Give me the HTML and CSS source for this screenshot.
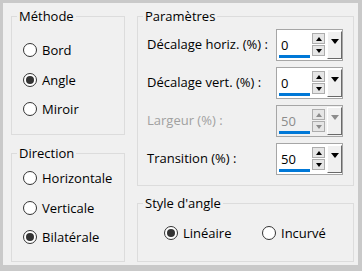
FILE: index.html
```html
<!DOCTYPE html>
<html lang="fr">
<head>
<meta charset="utf-8">
<link rel="stylesheet" href="styles.css">
</head>
<body>
<div class="dlg">
  <div class="col">
    <fieldset class="grp g-methode">
      <legend>Méthode</legend>
      <div class="opts">
        <label class="radio"><span class="rb"></span>Bord</label>
        <label class="radio"><span class="rb on"></span>Angle</label>
        <label class="radio"><span class="rb"></span>Miroir</label>
      </div>
    </fieldset>
    <fieldset class="grp g-direction">
      <legend>Direction</legend>
      <div class="opts">
        <label class="radio"><span class="rb"></span>Horizontale</label>
        <label class="radio"><span class="rb"></span>Verticale</label>
        <label class="radio"><span class="rb on"></span>Bilatérale</label>
      </div>
    </fieldset>
  </div>
  <div class="col">
    <fieldset class="grp g-params">
      <legend>Paramètres</legend>
      <div class="rows">
        <div class="row"><span class="lbl">Décalage horiz. (%) :</span>
          <div class="spin"><div class="edit">0</div><div class="ud"><span class="btn up"></span><span class="btn down"></span></div><div class="dd"></div></div>
        </div>
        <div class="row"><span class="lbl">Décalage vert. (%) :</span>
          <div class="spin"><div class="edit">0</div><div class="ud"><span class="btn up"></span><span class="btn down"></span></div><div class="dd"></div></div>
        </div>
        <div class="row dis"><span class="lbl">Largeur (%) :</span>
          <div class="spin"><div class="edit">50</div><div class="ud"><span class="btn up"></span><span class="btn down"></span></div><div class="dd"></div></div>
        </div>
        <div class="row"><span class="lbl">Transition (%) :</span>
          <div class="spin"><div class="edit">50</div><div class="ud"><span class="btn up"></span><span class="btn down"></span></div><div class="dd"></div></div>
        </div>
      </div>
    </fieldset>
    <fieldset class="grp g-style">
      <legend>Style d'angle</legend>
      <div class="hopts">
        <label class="radio first"><span class="rb on"></span>Linéaire</label>
        <label class="radio"><span class="rb"></span>Incurvé</label>
      </div>
    </fieldset>
  </div>
</div>
</body>
</html>
```

FILE: styles.css
```css
* { box-sizing: border-box; }
html, body { margin: 0; padding: 0; }
body {
  font-family: "Segoe UI", "Open Sans", "Noto Sans", sans-serif;
  font-size: 13px;
  color: #000;
  background: #c9c9c9;
}
.dlg {
  width: 362px;
  height: 271px;
  background: #f0f0f0;
  border-style: solid;
  border-color: #c9c9c9;
  border-width: 3px 4px 6px 3px;
  padding: 6px 4px 3px 8px;
  display: grid;
  grid-template-columns: 114px 217px;
  column-gap: 12px;
}
.col { display: flex; flex-direction: column; }
.grp {
  margin: 0;
  padding: 0;
  min-width: 0;
  border: 1px solid #dcdcdc;
}
.grp legend {
  padding: 0 2px;
  margin-left: 5px;
  line-height: 15px;
}
.g-methode { height: 126px; }
.g-direction { height: 116px; margin-top: 11px; }
.g-params { height: 177px; }
.g-style { height: 66px; margin-top: 10px; }

.opts {
  display: flex;
  flex-direction: column;
  gap: 13.5px;
  padding-left: 11px;
}
.g-methode .opts { padding-top: 18px; }
.g-direction .opts { padding-top: 9px; }

.radio {
  display: flex;
  align-items: center;
  height: 16px;
  line-height: 16px;
  white-space: nowrap;
}
.rb {
  flex: none;
  width: 14px;
  height: 14px;
  border: 1px solid #333;
  border-radius: 50%;
  background: #fff;
  margin-right: 5px;
  display: inline-flex;
  align-items: center;
  justify-content: center;
}
.rb.on::after {
  content: "";
  width: 8px;
  height: 8px;
  border-radius: 50%;
  background: #333;
}

.hopts {
  display: flex;
  padding: 14px 0 0 26px;
}
.hopts .first { width: 98px; }

.rows {
  display: flex;
  flex-direction: column;
  gap: 6px;
  padding: 5px 10px 0 9px;
}
.row {
  display: flex;
  justify-content: space-between;
  align-items: center;
  height: 32px;
}
.lbl { line-height: 16px; white-space: nowrap; padding-bottom: 2px; }

.spin {
  display: flex;
  width: 67px;
  height: 32px;
  border: 1px solid #a6a6a6;
  background: #fff;
}
.edit {
  width: 35px;
  padding-left: 4px;
  display: flex;
  align-items: center;
  background: linear-gradient(#0078d7, #0078d7) no-repeat 2px calc(100% - 2px) / 31px 3px;
}
.ud {
  width: 15px;
  display: flex;
  flex-direction: column;
  gap: 1px;
  padding-top: 3px;
}
.btn {
  width: 13px;
  height: 11px;
  border: 1px solid #adadad;
  background: #e6e6e6;
  display: flex;
  align-items: center;
  justify-content: center;
}
.btn::before {
  content: "";
  border-left: 3.5px solid transparent;
  border-right: 3.5px solid transparent;
}
.up::before { border-bottom: 4px solid #000; }
.down::before { border-top: 4px solid #000; }
.dd {
  width: 15px;
  margin: 1px 0;
  border-style: solid;
  border-width: 1px;
  border-color: #fff #696969 #696969 #fff;
  background: #f0f0f0;
  display: flex;
  justify-content: center;
  padding-top: 7px;
}
.dd::before {
  content: "";
  width: 0;
  height: 0;
  border-left: 4px solid transparent;
  border-right: 4px solid transparent;
  border-top: 5px solid #000;
}

.dis .lbl { color: #a0a0a0; }
.dis .spin { background: #f0f0f0; }
.dis .edit { color: #8c8c8c; }
.dis .up::before { border-bottom-color: #8c8c8c; }
.dis .down::before { border-top-color: #8c8c8c; }
.dis .dd::before { border-top-color: #8c8c8c; }
```
